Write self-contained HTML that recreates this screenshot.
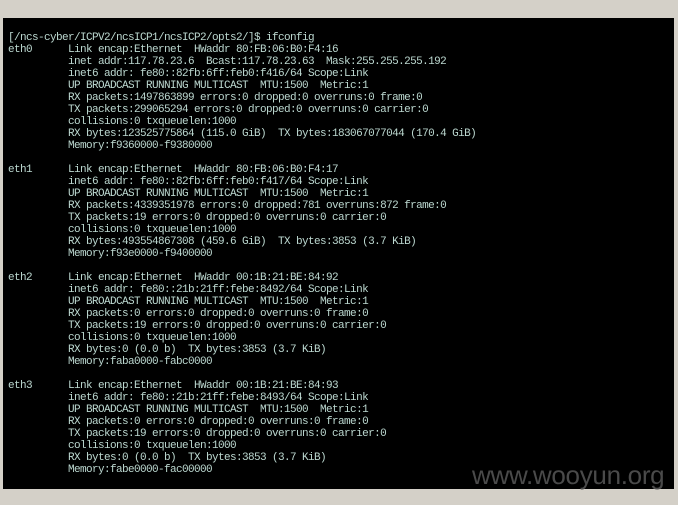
<!DOCTYPE html>
<html><head><meta charset="utf-8"><style>
html,body{margin:0;padding:0;background:#d4d0c8;width:678px;height:505px;overflow:hidden}
#t{position:absolute;left:3px;top:18px;width:671px;height:471px;background:#000}
pre{position:absolute;left:8px;top:32px;margin:0;font-family:"Liberation Mono",monospace;font-size:11px;letter-spacing:-0.6px;line-height:12px;color:#bcd8d0;white-space:pre}
#w{position:absolute;left:472px;top:460px;font-family:"Liberation Sans",sans-serif;font-size:26px;color:#4a4a4a;letter-spacing:-0.3px}
</style></head><body><div id="t"></div>
<pre>[/ncs-cyber/ICPV2/ncsICP1/ncsICP2/opts2/]$ ifconfig
eth0      Link encap:Ethernet  HWaddr 80:FB:06:B0:F4:16
          inet addr:117.78.23.6  Bcast:117.78.23.63  Mask:255.255.255.192
          inet6 addr: fe80::82fb:6ff:feb0:f416/64 Scope:Link
          UP BROADCAST RUNNING MULTICAST  MTU:1500  Metric:1
          RX packets:1497863899 errors:0 dropped:0 overruns:0 frame:0
          TX packets:299065294 errors:0 dropped:0 overruns:0 carrier:0
          collisions:0 txqueuelen:1000
          RX bytes:123525775864 (115.0 GiB)  TX bytes:183067077044 (170.4 GiB)
          Memory:f9360000-f9380000

eth1      Link encap:Ethernet  HWaddr 80:FB:06:B0:F4:17
          inet6 addr: fe80::82fb:6ff:feb0:f417/64 Scope:Link
          UP BROADCAST RUNNING MULTICAST  MTU:1500  Metric:1
          RX packets:4339351978 errors:0 dropped:781 overruns:872 frame:0
          TX packets:19 errors:0 dropped:0 overruns:0 carrier:0
          collisions:0 txqueuelen:1000
          RX bytes:493554867308 (459.6 GiB)  TX bytes:3853 (3.7 KiB)
          Memory:f93e0000-f9400000

eth2      Link encap:Ethernet  HWaddr 00:1B:21:BE:84:92
          inet6 addr: fe80::21b:21ff:febe:8492/64 Scope:Link
          UP BROADCAST RUNNING MULTICAST  MTU:1500  Metric:1
          RX packets:0 errors:0 dropped:0 overruns:0 frame:0
          TX packets:19 errors:0 dropped:0 overruns:0 carrier:0
          collisions:0 txqueuelen:1000
          RX bytes:0 (0.0 b)  TX bytes:3853 (3.7 KiB)
          Memory:faba0000-fabc0000

eth3      Link encap:Ethernet  HWaddr 00:1B:21:BE:84:93
          inet6 addr: fe80::21b:21ff:febe:8493/64 Scope:Link
          UP BROADCAST RUNNING MULTICAST  MTU:1500  Metric:1
          RX packets:0 errors:0 dropped:0 overruns:0 frame:0
          TX packets:19 errors:0 dropped:0 overruns:0 carrier:0
          collisions:0 txqueuelen:1000
          RX bytes:0 (0.0 b)  TX bytes:3853 (3.7 KiB)
          Memory:fabe0000-fac00000</pre>
<div id="w">www.wooyun.org</div>
</body></html>
